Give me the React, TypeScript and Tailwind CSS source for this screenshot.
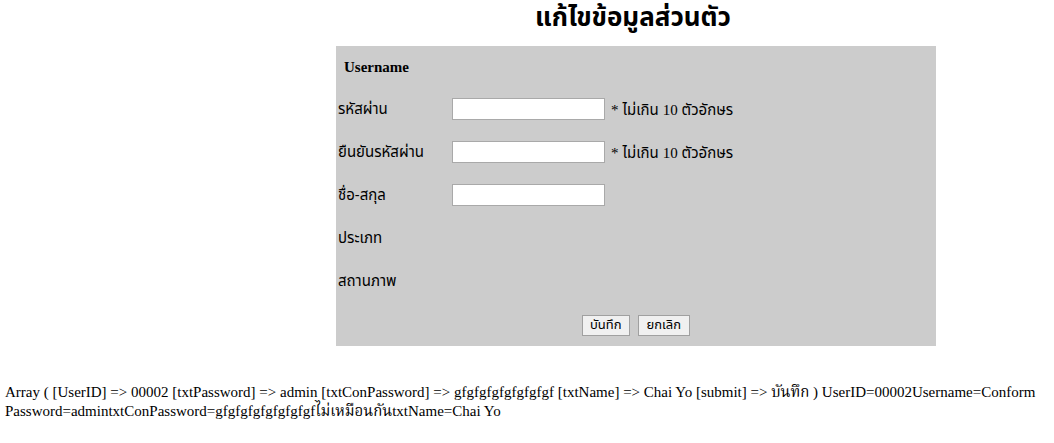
import React from "react";

const thai = "font-['Tahoma','Noto_Sans_Thai','Loma','Garuda','Noto_Sans',sans-serif]";
const serif = "font-['Liberation_Serif','Times_New_Roman','Noto_Serif_Thai','Norasi',serif]";

function Row({ text, children }: { text: React.ReactNode; children?: React.ReactNode }) {
  return (
    <div className="flex h-[43px] items-center">
      <div className={"w-[116px] pl-[2px] text-[15px] text-black " + thai}>{text}</div>
      <div className="mb-[4px] flex items-center">{children}</div>
    </div>
  );
}

function Field({ note }: { note?: boolean }) {
  return (
    <>
      <input type="text" className="h-[22px] w-[153px] border border-[#a9a9a9] bg-white px-1 outline-none" />
      {note && (
        <span className={"ml-[6px] mt-[4px] text-[15px] text-black " + thai}>
          <span className={serif}>*</span> ไม่เกิน <span className={serif}>10</span> ตัวอักษร
        </span>
      )}
    </>
  );
}

export default function App() {
  return (
    <div className="min-h-screen bg-white text-black">
      <div className="ml-[333px] w-[600px] pt-[2px] text-center">
        <h2 className={"text-[26px] font-bold leading-[32px] " + thai}>แก้ไขข้อมูลส่วนตัว</h2>
      </div>
      <div className="ml-[336px] mt-[12px] h-[300px] w-[600px] bg-[#cccccc]">
        <div className="flex h-[43px] items-center pl-[8px]">
          <span className={"text-[15px] font-bold " + serif}>Username</span>
        </div>
        <Row text="รหัสผ่าน"><Field note /></Row>
        <Row text="ยืนยันรหัสผ่าน"><Field note /></Row>
        <Row text="ชื่อ-สกุล"><Field /></Row>
        <Row text="ประเภท" />
        <Row text="สถานภาพ" />
        <div className="flex h-[43px] items-center justify-center gap-[8px]">
          <button className={"h-[21px] border border-[#a0a0a0] bg-[#f0f0f0] px-[7px] text-[13px] leading-none " + thai}>บันทึก</button>
          <button className={"h-[21px] border border-[#a0a0a0] bg-[#f0f0f0] px-[8px] text-[13px] leading-none " + thai}>ยกเลิก</button>
        </div>
      </div>
      <p className={"mt-[37px] px-[5px] text-[15px] leading-[19px] " + serif}>
        Array ( [UserID] =&gt; 00002 [txtPassword] =&gt; admin [txtConPassword] =&gt; gfgfgfgfgfgfgfgf [txtName] =&gt; Chai Yo [submit] =&gt; บันทึก ) UserID=00002Username=Conform Password=admintxtConPassword=gfgfgfgfgfgfgfgfไม่เหมือนกันtxtName=Chai Yo
      </p>
    </div>
  );
}
